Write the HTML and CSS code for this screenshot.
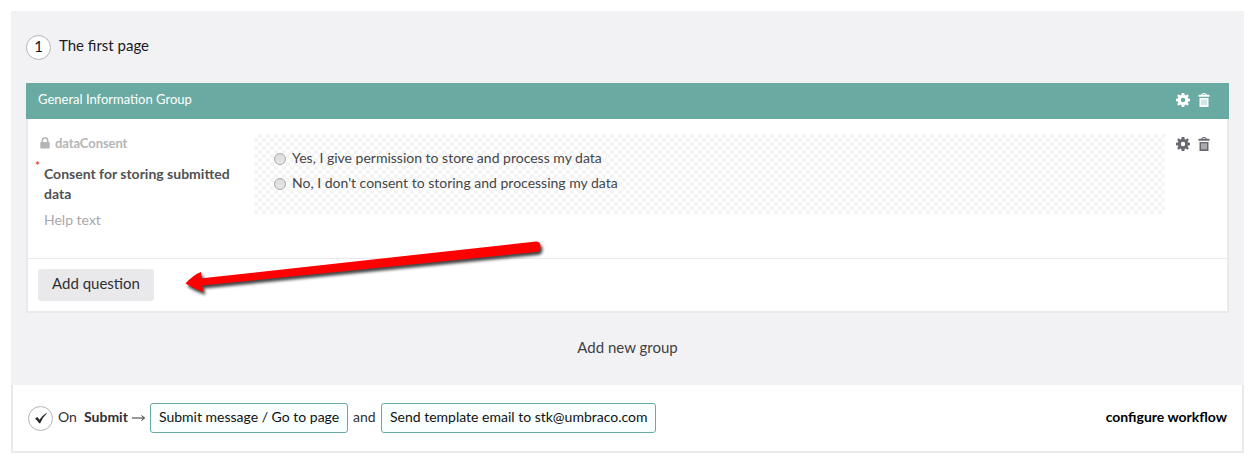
FILE: index.html
```html
<!DOCTYPE html>
<html lang="en">
<head>
<meta charset="utf-8">
<title>Form designer</title>
<link rel="stylesheet" href="styles.css">
</head>
<body>
<svg class="symbols" width="0" height="0">
  <symbol id="gear" viewBox="0 0 14 14"><path fill-rule="evenodd" d="M5.700 0h2.600l.4 2 1 .4 1.700-1.100 1.400 1.400-1.100 1.700.4 1 1.900.4v2.400l-1.900.4-.4 1 1.100 1.700-1.400 1.400-1.700-1.100-1 .4-.4 2H5.700l-.4-2-1-.4-1.700 1.100-1.400-1.400 1.100-1.700-.4-1L0 8.200V5.800l1.900-.4.4-1-1.100-1.700 1.400-1.400 1.700 1.100 1-.4zM7 4.800a2.200 2.200 0 1 0 0 4.400 2.200 2.200 0 0 0 0-4.400z"/></symbol>
  <symbol id="trash" viewBox="0 0 12 14"><path d="M.5 1.700h2.700Q3.500 0 6 0t2.800 1.700h2.700v2H.5zm3.700 0h3.600Q7.500 1 6 1t-1.800.7z" fill-rule="evenodd"/><path d="M1.500 5h9v9h-9z"/><path class="slats" d="M3 6.300h6v6H3z"/></symbol>
</svg>
<main class="designer">
  <section class="page">
    <header class="page-head"><span class="badge">1</span><span class="page-title">The first page</span></header>
    <div class="group">
      <div class="group-head">
        <span class="group-title">General Information Group</span>
        <div class="tools"><svg class="gear"><use href="#gear"/></svg><svg class="trash"><use href="#trash"/></svg></div>
      </div>
      <div class="question">
        <div class="info">
          <div class="alias"><svg class="lock" viewBox="0 0 10 12"><path fill-rule="evenodd" d="M1.500 5V3.500a3.500 3.500 0 0 1 7 0V5h.5q.7 0 .7.7v5q0 .8-.7.8H1q-.7 0-.7-.8v-5Q.3 5 1 5zm1.600 0h3.800V3.500a1.900 1.900 0 0 0-3.800 0z"/></svg><span>dataConsent</span></div>
          <span class="required">*</span>
          <div class="label">Consent for storing submitted data</div>
          <div class="help">Help text</div>
        </div>
        <div class="preview">
          <div class="option"><i class="radio"></i><span>Yes, I give permission to store and process my data</span></div>
          <div class="option"><i class="radio"></i><span>No, I don't consent to storing and processing my data</span></div>
        </div>
        <div class="tools dark"><svg class="gear"><use href="#gear"/></svg><svg class="trash"><use href="#trash"/></svg></div>
      </div>
      <div class="group-foot"><button class="add">Add question</button></div>
    </div>
    <div class="new-group"><span>Add new group</span></div>
  </section>
  <footer class="workflow">
    <span class="badge check"><svg viewBox="0 0 12 11"><path d="M0 5.800 2.200 4l2.300 2.700Q7.600 2.400 11.300 0l.4.600Q7.800 4.200 5.200 10.300H4.100Q2.300 7.200 0 5.800z"/></svg></span>
    <span class="on">On</span><span class="submit">Submit</span>
    <svg class="to" viewBox="0 0 14 8"><path d="M0 4h12.500M9.500 1.500 12.500 4l-3 2.500"/></svg>
    <span class="chip">Submit message / Go to page</span>
    <span class="and">and</span>
    <span class="chip second">Send template email to stk@umbraco.com</span>
    <span class="configure">configure workflow</span>
  </footer>
  <svg class="arrow" width="390" height="75" viewBox="170 230 390 75"><path d="M185.500 283.500Q193 275 201 272l1 6.300L536 241.500q4.500 0 4.500 5t-4.500 5.500L202 285.500l1.500 6.500Q194 289 185.500 283.500z"/></svg>
</main>
</body>
</html>
```
FILE: styles.css
```css
* { box-sizing: border-box; }
body { margin: 0; background: #fff; font: 14px/20px Lato, sans-serif; color: #303033; }
span { white-space: nowrap; }
.symbols { position: absolute; }
.designer { position: relative; padding: 11px 8px 8px 11px; height: 461px; }
.page { height: 374px; background: #f2f2f4; padding: 22px 15px 0; }
.page-head { display: flex; height: 50px; }
.badge { width: 25px; height: 25px; margin-top: 2px; border: 1px solid #b5b5b8; border-radius: 50%; background: #fff; text-align: center; font-size: 15px; line-height: 21px; color: #111; }
.page-title { margin-left: 8px; font-size: 15px; line-height: 24px; color: #1b1b1f; }
.group { height: 230px; background: #fff; border: 2px solid #e9e9eb; border-top: 0; }
.group-head { display: flex; justify-content: space-between; height: 36px; margin: 0 -2px; padding: 7px 19px 0 12px; background: #69aba2; color: #fff; font-size: 13px; }
.group-title { line-height: 18px; }
.tools { display: flex; gap: 8px; height: 14px; margin-top: 3px; fill: #fff; color: #d3e6e3; }
.gear { width: 14px; height: 14px; }
.trash { width: 12px; height: 14px; }
.slats { fill: currentColor; }
.dark { fill: #68686e; color: #aaaaad; }
.question { display: flex; height: 139px; padding-top: 15px; }
.info { position: relative; width: 226px; padding-left: 16px; }
.alias { display: flex; margin-left: -4px; gap: 5px; font-size: 13px; font-weight: 700; letter-spacing: -.08px; color: #b5b5b8; line-height: 19px; }
.lock { width: 10px; height: 12px; margin-top: 3px; fill: #b5b5b8; }
.required { position: absolute; left: 7px; top: 22px; color: #e43; font-size: 12px; font-weight: 700; }
.label { width: 190px; margin-top: 11px; font-size: 14px; font-weight: 700; line-height: 20px; color: #515154; }
.help { margin-top: 6px; font-size: 14px; color: #a8a8ab; }
.preview { width: 911px; height: 80px; padding: 12px 20px; background: repeating-conic-gradient(#f4f4f4 0 25%, #fff 0 50%) 0 0 / 8px 8px; }
.option { display: flex; gap: 6px; height: 25px; color: #454548; line-height: 23px; }
.radio { width: 12px; height: 12px; margin-top: 7px; border: 1px solid #a9a9a9; border-radius: 50%; background: linear-gradient(#dcdcdc, #e7e7e7); }
.question .tools { margin-left: 11px; }
.group-foot { height: 53px; border-top: 1px solid #e9e9eb; padding: 10px; }
.add { display: block; width: 116px; height: 32px; border: 0; border-radius: 3px; background: #e9e9eb; color: #303033; font: 15px/28px Lato, sans-serif; padding: 0 0 4px; }
.new-group { padding-top: 24px; text-align: center; font-size: 15px; color: #404043; }
.workflow { display: flex; height: 68px; padding: 18px 15px 0; border: 2px solid #e9e9eb; border-top: 0; line-height: 28px; }
.check { display: flex; align-items: center; justify-content: center; margin-top: 3px; }
.check svg { width: 12px; height: 11px; fill: #252528; margin-top: -1px; }
.on { width: 26px; margin-left: 5px; }
.submit { width: 45px; font-weight: 700; }
.to { width: 14px; height: 8px; margin: 11px 4px 0 3px; fill: none; stroke: #303033; }
.chip { width: 198px; height: 30px; padding-left: 8px; border: 1px solid #69aba2; border-radius: 3px; background: #f8fffe; color: #111; line-height: 26px; }
.and { width: 28px; margin-left: 5px; }
.second { width: 275px; }
.configure { margin-left: auto; font-weight: 700; color: #000; }
.arrow { position: absolute; left: 170px; top: 230px; fill: #f00; filter: drop-shadow(2px 3px 1.500px #000b); }
```
